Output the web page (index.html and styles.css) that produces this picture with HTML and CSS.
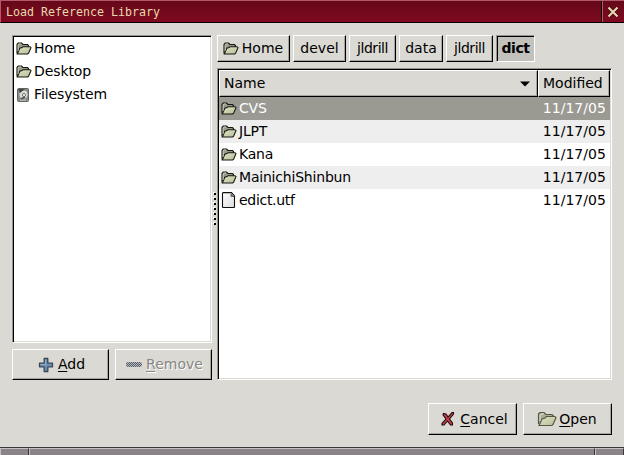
FILE: index.html
```html
<!DOCTYPE html>
<html lang="en">
<head>
<meta charset="utf-8">
<title>Load Reference Library</title>
<link rel="stylesheet" href="styles.css">
</head>
<body>
<svg class="defs" width="0" height="0">
  <defs>
    <linearGradient id="fold" x1="0" y1="0" x2="1" y2="1"><stop offset="0" stop-color="#dfe3c4"/><stop offset="1" stop-color="#b9bf98"/></linearGradient>
    <linearGradient id="page" x1="0" y1="0" x2="1" y2="1"><stop offset="0" stop-color="#fff"/><stop offset="1" stop-color="#dcdcdc"/></linearGradient>
    <pattern id="dither" width="2" height="2" patternUnits="userSpaceOnUse"><rect width="2" height="2" fill="#b5b8ba"/><rect width="1" height="1" fill="#555e69"/><rect x="1" y="1" width="1" height="1" fill="#555e69"/></pattern>
    <symbol id="folder" viewBox="0 0 16 13">
      <path d="M1 11.5V2.5L2.2 1H5.5L7 2.5H11.5L12.5 3.5V5" fill="#96998a" stroke="#17170f" stroke-width="1.1"/>
      <path d="M1.3 12L3.8 6.3L6 5.6L7 4.7H14L15 5.6L12.6 11.2L11.7 12Z" fill="url(#fold)" stroke="#17170f" stroke-width="1.1"/>
      <path d="M2.2 9V3L3 2H5" fill="none" stroke="#d3d6c3" stroke-width=".8"/>
    </symbol>
  </defs>
</svg>
<header class="titlebar">
  <span class="title">Load Reference Library</span>
  <span class="close"><svg width="12" height="12" viewBox="0 0 12 12"><path d="M1.5 1.5L10.5 10.5M10.5 1.5L1.5 10.5" stroke="#42000f" stroke-width="3.4"/><path d="M1.5 1.5L10.5 10.5M10.5 1.5L1.5 10.5" stroke="#e5d9ae" stroke-width="2.2"/></svg></span>
</header>
<main class="dialog">
  <div class="panes">
    <section class="side">
      <div class="well places">
        <div class="row"><svg class="ico"><use href="#folder"/></svg><span>Home</span></div>
        <div class="row"><svg class="ico"><use href="#folder"/></svg><span>Desktop</span></div>
        <div class="row"><svg class="ico disk" viewBox="0 0 16 16"><rect x="1.5" y="1.5" width="11" height="13" rx="1" fill="#898d88" stroke="#62635f"/><circle cx="7.5" cy="7.5" r="4" fill="#d8dcd5"/><path d="M2 2H9L4 6Z" fill="#454844"/><circle cx="8" cy="8" r="1.6" fill="#f1f2ed" stroke="#747972"/><path d="M5 12L9 10" stroke="#494d49" stroke-width="1.5"/><path d="M4 13.2H10" stroke="#c6c9c3"/></svg><span>Filesystem</span></div>
      </div>
      <div class="tools">
        <div class="btn"><svg width="16" height="16" viewBox="0 0 16 16"><path d="M6.2 1.5H9.8V6.2H14.5V9.8H9.8V14.5H6.2V9.8H1.5V6.2H6.2Z" fill="#6d91b5" stroke="#394654" stroke-width="1.3" stroke-linejoin="round"/><path d="M7.5 2.5V7.5H2.5" fill="none" stroke="#8fb0cc"/></svg><span><u>A</u>dd</span></div>
        <div class="btn off"><svg width="16" height="16" viewBox="0 0 16 16"><rect x="0" y="5" width="16" height="5" rx="2" fill="url(#dither)"/></svg><span><u>R</u>emove</span></div>
      </div>
    </section>
    <div class="grip"><i></i><i></i><i></i><i></i><i></i><i></i><i></i></div>
    <section class="browser">
      <nav class="path">
        <div class="btn home"><svg class="ico"><use href="#folder"/></svg><span>Home</span></div>
        <div class="btn devel"><span>devel</span></div>
        <div class="btn mid"><span>jldrill</span></div>
        <div class="btn data"><span>data</span></div>
        <div class="btn mid"><span>jldrill</span></div>
        <div class="btn on"><span>dict</span></div>
      </nav>
      <div class="well files">
        <div class="head">
          <div class="cell name"><span>Name</span><svg width="10" height="6" viewBox="0 0 10 6"><path d="M0 .5H10L5 5.5Z"/></svg></div>
          <div class="cell date"><span>Modified</span></div>
        </div>
        <div class="row sel"><svg class="ico"><use href="#folder"/></svg><span>CVS</span><time>11/17/05</time></div>
        <div class="row alt"><svg class="ico"><use href="#folder"/></svg><span>JLPT</span><time>11/17/05</time></div>
        <div class="row"><svg class="ico"><use href="#folder"/></svg><span>Kana</span><time>11/17/05</time></div>
        <div class="row alt"><svg class="ico"><use href="#folder"/></svg><span>MainichiShinbun</span><time>11/17/05</time></div>
        <div class="row"><svg class="ico doc" viewBox="0 0 16 16"><path d="M2 .6H10.5L13.5 4V15L13 15.5H2L1.5 15V1.5Z" fill="url(#page)" stroke="#111" stroke-width="1.1"/><path d="M10 1.5V4.5H13" fill="#777" stroke="#666"/></svg><span class="tight">edict.utf</span><time>11/17/05</time></div>
      </div>
    </section>
  </div>
  <footer class="actions">
    <div class="btn cancel"><svg width="14" height="16" viewBox="0 0 14 16"><path d="M2.5 2.5L5 3L7 6L11 1.5H12.5V3L8.5 8L11.5 12V14H9.5L6.5 10L3 14H1V12.5L5 8L2 4Z" fill="#c3424d" stroke="#1d090b" stroke-width="1.1"/></svg><span><u>C</u>ancel</span></div>
    <div class="btn open"><svg width="20" height="16" viewBox="0 0 20 16"><path d="M1.5 13V3L3 1.5H7L9 3.5H15L16.5 5V7" fill="#a9ad96" stroke="#545846" stroke-width="1.2"/><path d="M2 14.5L5 8L8 7L9.5 5.5H18L19 6.8L16 13.5L15 14.5Z" fill="url(#fold)" stroke="#545846" stroke-width="1.2"/><path d="M3 10V4L4 3H7" fill="none" stroke="#e0e3cf"/></svg><span><u>O</u>pen</span></div>
  </footer>
</main>
<div class="frame"><i></i><i></i><i></i></div>
</body>
</html>
```
FILE: styles.css
```css
* { box-sizing: border-box; }
body {
  margin: 0;
  width: 624px;
  height: 455px;
  overflow: hidden;
  display: flex;
  flex-direction: column;
  background: #dad9d4;
  color: #000;
  font: 14px/22px "DejaVu Sans", sans-serif;
  white-space: nowrap;
}
svg { display: block; flex: none; }
.defs { position: absolute; }
.titlebar {
  height: 23px;
  flex: none;
  display: flex;
  justify-content: space-between;
  background: linear-gradient(#650819, #800a20);
  border-top: 1px solid #b4596a;
  border-left: 1px solid #b4596a;
  border-bottom: 1px solid #000;
}
.title {
  padding-left: 5px;
  color: #e5d9ae;
  font: 11.63px/23px "DejaVu Sans Mono", monospace;
}
.close {
  width: 23px;
  display: flex;
  align-items: center;
  justify-content: center;
  border-left: 1px solid #000;
  box-shadow: inset 1px 0 #b4596a;
}
.dialog { height: 424px; flex: none; padding: 12px 12px 0; }
.panes { display: flex; height: 345px; }
.side { width: 200px; display: flex; flex-direction: column; gap: 6px; }
.well {
  background: #fff;
  border: 1px solid;
  border-color: #96958f #fff #fff #96958f;
  box-shadow: inset 1px 1px #000, inset -1px -1px #dad9d4;
}
.places { height: 308px; padding: 1px 3px; }
.row { display: flex; align-items: center; height: 23px; gap: 2px; }
.row span { padding-bottom: 2px; letter-spacing: -.2px; }
.row .tight { letter-spacing: -.3px; }
.places .row span { letter-spacing: -.1px; }
.ico { width: 16px; height: 13px; }
.disk, .doc { height: 16px; }
.doc { margin-bottom: 1px; }
.tools { display: grid; grid-template-columns: 97px 97px; gap: 6px; height: 31px; }
.btn {
  display: flex;
  align-items: center;
  justify-content: center;
  gap: 4px;
  border: 1px solid;
  border-color: #fff #000 #000 #fff;
  box-shadow: inset -1px -1px #a6a59e;
}
.tools span { padding-bottom: 2px; }
.tools .btn { padding-left: 2px; }
u { text-underline-offset: 2px; text-decoration-thickness: 1px; }
.off { color: #888782; text-shadow: 1px 1px #fff; }
.grip {
  width: 5px;
  display: flex;
  flex-direction: column;
  gap: 3px;
  padding: 158px 0 0 2px;
}
.grip i {
  width: 2px;
  height: 2px;
  background: #000;
  box-shadow: -1px -1px #fff;
}
.browser { width: 395px; }
.path { display: flex; gap: 3px; height: 27px; margin-bottom: 6px; }
.path span { padding-bottom: 2px; }
.home { width: 73px; }
.path .home { gap: 3px; padding-right: 1px; }
.devel { width: 53px; }
.mid { width: 47px; letter-spacing: -.45px; }
.data { width: 44px; }
.on {
  width: 39px;
  background: #c2c1bc;
  font-weight: bold;
  letter-spacing: -.4px;
  border-color: #96958f #fff #fff #96958f;
  box-shadow: inset 1px 1px #000;
}
.files { height: 312px; padding: 1px; }
.head { display: flex; height: 27px; }
.head span { padding-bottom: 2px; }
.cell {
  display: flex;
  align-items: center;
  justify-content: space-between;
  padding: 0 7px 0 4px;
  background: #dad9d4;
  border: 1px solid;
  border-color: #fff #000 #000 #fff;
  box-shadow: inset -1px -1px #a6a59e;
}
.name { width: 319px; }
.date { width: 72px; }
.files .row { padding: 0 4px 0 2px; }
.files time { margin-left: auto; padding-bottom: 2px; letter-spacing: .05px; }
.sel { background: #9a9992; color: #fff; }
.alt { background: #eee; }
.actions { display: flex; justify-content: flex-end; gap: 6px; height: 32px; margin-top: 23px; }
.actions .btn { width: 89px; }
.actions .cancel { gap: 5px; padding-left: 4px; }
.actions .open { gap: 2px; padding-right: 1px; }
.frame {
  height: 8px;
  flex: none;
  display: grid;
  grid-template-columns: 29px 566px 29px;
  border-top: 1px solid #393539;
  background: #8a8388;
}
.frame i {
  border-top: 1px solid #c5bfc5;
  border-left: 1px solid #c5bfc5;
  border-right: 1px solid #393539;
}
```
